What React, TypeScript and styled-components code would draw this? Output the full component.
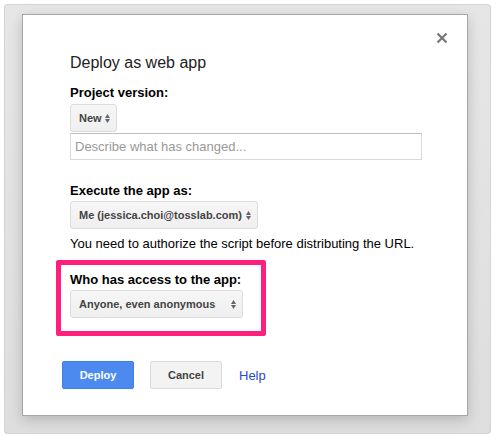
import React from "react";
import styled, { createGlobalStyle } from "styled-components";

const Global = createGlobalStyle`
  html, body { margin: 0; padding: 0; background: #ffffff; }
  body { font-family: "Liberation Sans", Arial, sans-serif; }
`;

const Frame = styled.div`
  box-sizing: border-box;
  margin: 4px 0 0 4px;
  width: 487px;
  height: 430px;
  border-radius: 4px;
  background: linear-gradient(180deg, #e6e6e6 0%, #dedede 100%);
  box-shadow: inset 0 0 0 1px #d4d4d4;
  padding: 10px 0 0 18px;
`;

const Dialog = styled.div`
  position: relative;
  box-sizing: border-box;
  width: 446px;
  height: 402px;
  background: #fff;
  border: 1px solid #a6a6a6;
  box-shadow: 0 4px 12px rgba(0, 0, 0, 0.18);
  padding: 38px 0 0 47px;
  display: flex;
  flex-direction: column;
  align-items: flex-start;
`;

const Close = styled.button`
  position: absolute;
  top: 16px;
  right: 18px;
  width: 14px;
  height: 14px;
  padding: 0;
  border: 0;
  background: transparent;
  display: flex;
  align-items: center;
  justify-content: center;
`;

const Title = styled.h1`
  margin: 0;
  font-size: 16px;
  font-weight: normal;
  color: #222;
  line-height: 20px;
`;

const Label = styled.div<{ $top: number }>`
  margin-top: ${(p) => p.$top}px;
  font-size: 13px;
  font-weight: bold;
  color: #000;
  line-height: 16px;
`;

const Select = styled.div<{ $w: number; $top: number }>`
  box-sizing: border-box;
  margin-top: ${(p) => p.$top}px;
  width: ${(p) => p.$w}px;
  height: 28px;
  border: 1px solid #dcdcdc;
  border-radius: 3px;
  background: linear-gradient(180deg, #f6f6f6, #efefef);
  display: flex;
  align-items: center;
  justify-content: space-between;
  padding: 0 6px 0 8px;
  font-size: 11px;
  font-weight: bold;
  color: #444;
  gap: 3px;
`;

const Arrows = styled.span`
  display: flex;
  flex-direction: column;
  align-items: center;
  gap: 1px;
`;

const Input = styled.div`
  box-sizing: border-box;
  margin-top: 1px;
  width: 352px;
  height: 27px;
  border: 1px solid #d9d9d9;
  border-top-color: #c0c0c0;
  padding: 0 4px;
  display: flex;
  align-items: center;
  font-size: 13px;
  color: #999;
`;

const Note = styled.div`
  margin-top: 7px;
  font-size: 13px;
  color: #000;
  line-height: 16px;
`;

const Highlight = styled.div`
  box-sizing: border-box;
  margin: 8px 0 0 -14px;
  width: 210px;
  height: 76px;
  border: 5px solid #ff1f7c;
  border-radius: 2px;
  padding: 7px 0 0 9px;
`;

const Buttons = styled.div`
  margin: 25px 0 0 -8px;
  display: flex;
  align-items: center;
`;

const Button = styled.button<{ $primary?: boolean }>`
  box-sizing: border-box;
  width: 72px;
  height: 28px;
  border-radius: 2px;
  font-family: "Liberation Sans", Arial, sans-serif;
  font-size: 11px;
  font-weight: bold;
  padding: 0;
  margin-right: ${(p) => (p.$primary ? 16 : 17)}px;
  color: ${(p) => (p.$primary ? "#fff" : "#444")};
  background: ${(p) => (p.$primary ? "#4d8af0" : "#f3f3f3")};
  border: 1px solid ${(p) => (p.$primary ? "#3f7fe8" : "#dadada")};
`;

const Help = styled.a`
  font-size: 13px;
  color: #2b4ac9;
  text-decoration: none;
`;

const ArrowIcon = () => (
  <Arrows>
    <svg width="5" height="4" viewBox="0 0 5 4"><path d="M2.5 0L5 4H0z" fill="#666" /></svg>
    <svg width="5" height="4" viewBox="0 0 5 4"><path d="M0 0h5L2.5 4z" fill="#666" /></svg>
  </Arrows>
);

export default function App() {
  return (
    <>
      <Global />
      <Frame>
        <Dialog>
          <Close aria-label="Close">
            <svg width="12" height="12" viewBox="0 0 12 12">
              <path d="M1.5 1.5L10.5 10.5M10.5 1.5L1.5 10.5" stroke="#777" strokeWidth="2.2" />
            </svg>
          </Close>
          <Title>Deploy as web app</Title>
          <Label $top={12}>Project version:</Label>
          <Select $w={47} $top={3}>
            <span>New</span>
            <ArrowIcon />
          </Select>
          <Input>Describe what has changed...</Input>
          <Label $top={23}>Execute the app as:</Label>
          <Select $w={188} $top={2}>
            <span>Me (jessica.choi@tosslab.com)</span>
            <ArrowIcon />
          </Select>
          <Note>You need to authorize the script before distributing the URL.</Note>
          <Highlight>
            <Label $top={0}>Who has access to the app:</Label>
            <Select $w={173} $top={2}>
              <span>Anyone, even anonymous</span>
              <ArrowIcon />
            </Select>
          </Highlight>
          <Buttons>
            <Button $primary>Deploy</Button>
            <Button>Cancel</Button>
            <Help href="#">Help</Help>
          </Buttons>
        </Dialog>
      </Frame>
    </>
  );
}
